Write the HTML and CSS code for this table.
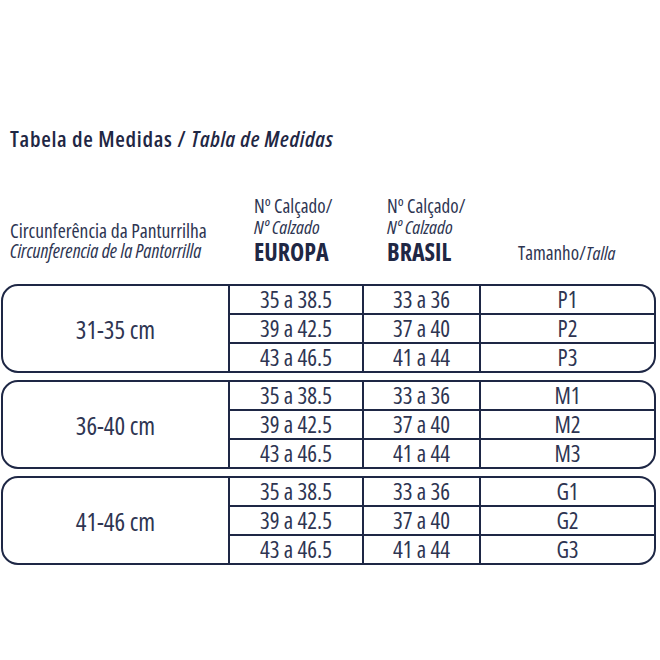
FILE: index.html
```html
<!DOCTYPE html>
<html lang="pt">
<head>
<meta charset="utf-8">
<title>Tabela de Medidas</title>
<link rel="stylesheet" href="styles.css">
</head>
<body>
<div class="page">
  <h1 class="title">Tabela de Medidas / <em>Tabla de Medidas</em></h1>
  <div class="head">
    <div class="h-circ">
      <div>Circunferência da Panturrilha</div>
      <div class="it">Circunferencia de la Pantorrilla</div>
    </div>
    <div class="h-size">
      <div>Nº Calçado/</div>
      <div class="it">Nº Calzado</div>
      <div class="big">EUROPA</div>
    </div>
    <div class="h-size">
      <div>Nº Calçado/</div>
      <div class="it">Nº Calzado</div>
      <div class="big">BRASIL</div>
    </div>
    <div class="h-talla">Tamanho/<span class="it">Talla</span></div>
  </div>
  <div class="groups">
    <div class="group">
      <div class="range">31-35 cm</div>
      <div class="c">35 a 38.5</div><div class="c">33 a 36</div><div class="c">P1</div>
      <div class="c r">39 a 42.5</div><div class="c r">37 a 40</div><div class="c r">P2</div>
      <div class="c r">43 a 46.5</div><div class="c r">41 a 44</div><div class="c r">P3</div>
    </div>
    <div class="group">
      <div class="range">36-40 cm</div>
      <div class="c">35 a 38.5</div><div class="c">33 a 36</div><div class="c">M1</div>
      <div class="c r">39 a 42.5</div><div class="c r">37 a 40</div><div class="c r">M2</div>
      <div class="c r">43 a 46.5</div><div class="c r">41 a 44</div><div class="c r">M3</div>
    </div>
    <div class="group">
      <div class="range">41-46 cm</div>
      <div class="c">35 a 38.5</div><div class="c">33 a 36</div><div class="c">G1</div>
      <div class="c r">39 a 42.5</div><div class="c r">37 a 40</div><div class="c r">G2</div>
      <div class="c r">43 a 46.5</div><div class="c r">41 a 44</div><div class="c r">G3</div>
    </div>
  </div>
</div>
</body>
</html>
```

FILE: styles.css
```css
html, body {
  margin: 0;
  padding: 0;
  background: #ffffff;
}
body {
  font-family: "Open Sans", "Noto Sans", sans-serif;
  font-stretch: 75%;
  font-weight: 400;
  color: #2e3552;
}
.page {
  width: 660px;
  height: 660px;
  padding-top: 124px;
  box-sizing: border-box;
}
.title {
  margin: 0 0 0 10px;
  font-size: 22px;
  line-height: 28px;
  font-weight: 600;
  letter-spacing: 0.7px;
  color: #1f2744;
}
.title em {
  font-style: italic;
}
.it {
  font-style: italic;
}
.head {
  display: grid;
  grid-template-columns: 228px 134px 117px 1fr;
  align-items: end;
  margin-top: 44px;
}
.h-circ {
  padding-left: 10px;
  font-size: 19.5px;
  line-height: 20px;
  padding-bottom: 4px;
}
.h-size {
  padding-left: 26px;
  font-size: 19px;
  line-height: 21px;
}
.h-size + .h-size {
  padding-left: 25px;
}
.h-size .big {
  font-size: 24px;
  font-weight: 700;
  line-height: 27px;
  color: #1f2744;
}
.h-talla {
  padding-left: 39px;
  font-size: 19px;
  line-height: 21px;
  padding-bottom: 1px;
}
.groups {
  display: flex;
  flex-direction: column;
  gap: 7px;
  margin: 19px 4px 0 1px;
}
.group {
  display: grid;
  grid-template-columns: 225px 134px 117px 1fr;
  grid-template-rows: 27px 29px 29px;
  border: 2px solid #1e2745;
  border-radius: 17px;
}
.range {
  grid-row: 1 / span 3;
  display: flex;
  align-items: center;
  justify-content: center;
  font-size: 25px;
}
.c {
  display: flex;
  align-items: center;
  justify-content: center;
  border-left: 2px solid #1e2745;
  font-size: 23px;
  line-height: 27px;
}
.c.r {
  border-top: 2px solid #1e2745;
}
```
